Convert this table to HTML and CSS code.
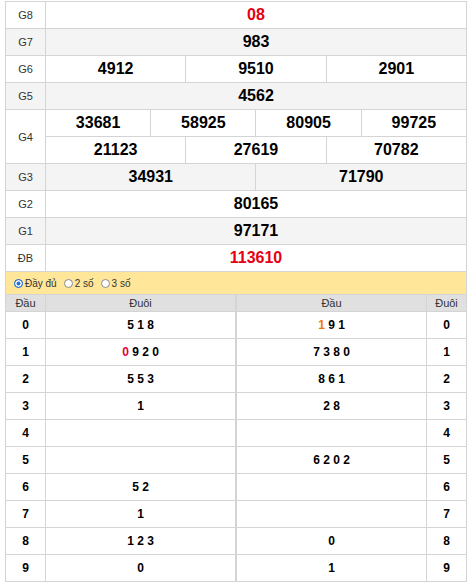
FILE: index.html
```html
<!DOCTYPE html>
<html lang="vi">
<head>
<meta charset="utf-8">
<title>Kết quả xổ số</title>
<link rel="stylesheet" href="styles.css">
</head>
<body>
<div class="wrap">
  <table class="kq">
    <colgroup>
      <col class="c-lb">
      <col><col><col><col><col><col><col><col><col><col><col><col>
    </colgroup>
    <tbody>
      <tr><td class="lb">G8</td><td colspan="12" class="red">08</td></tr>
      <tr class="alt"><td class="lb">G7</td><td colspan="12">983</td></tr>
      <tr><td class="lb">G6</td><td colspan="4">4912</td><td colspan="4">9510</td><td colspan="4">2901</td></tr>
      <tr class="alt"><td class="lb">G5</td><td colspan="12">4562</td></tr>
      <tr><td class="lb" rowspan="2">G4</td><td colspan="3">33681</td><td colspan="3">58925</td><td colspan="3">80905</td><td colspan="3">99725</td></tr>
      <tr><td colspan="4">21123</td><td colspan="4">27619</td><td colspan="4">70782</td></tr>
      <tr class="alt"><td class="lb">G3</td><td colspan="6">34931</td><td colspan="6">71790</td></tr>
      <tr><td class="lb">G2</td><td colspan="12">80165</td></tr>
      <tr class="alt"><td class="lb">G1</td><td colspan="12">97171</td></tr>
      <tr><td class="lb">ĐB</td><td colspan="12" class="red">113610</td></tr>
    </tbody>
  </table>

  <div class="opts">
    <label class="opt"><input type="radio" name="mode" checked><span>Đầy đủ</span></label>
    <label class="opt"><input type="radio" name="mode"><span>2 số</span></label>
    <label class="opt"><input type="radio" name="mode"><span>3 số</span></label>
  </div>

  <div class="loto">
    <table class="lt lt-left">
      <colgroup><col class="c-head"><col></colgroup>
      <thead><tr><th>Đầu</th><th>Đuôi</th></tr></thead>
      <tbody>
        <tr><td>0</td><td>5 1 8</td></tr>
        <tr><td>1</td><td><span class="red2">0</span> 9 2 0</td></tr>
        <tr><td>2</td><td>5 5 3</td></tr>
        <tr><td>3</td><td>1</td></tr>
        <tr><td>4</td><td></td></tr>
        <tr><td>5</td><td></td></tr>
        <tr><td>6</td><td>5 2</td></tr>
        <tr><td>7</td><td>1</td></tr>
        <tr><td>8</td><td>1 2 3</td></tr>
        <tr><td>9</td><td>0</td></tr>
      </tbody>
    </table>
    <table class="lt lt-right">
      <colgroup><col><col class="c-head"></colgroup>
      <thead><tr><th>Đầu</th><th>Đuôi</th></tr></thead>
      <tbody>
        <tr><td><span class="orange">1</span> 9 1</td><td>0</td></tr>
        <tr><td>7 3 8 0</td><td>1</td></tr>
        <tr><td>8 6 1</td><td>2</td></tr>
        <tr><td>2 8</td><td>3</td></tr>
        <tr><td></td><td>4</td></tr>
        <tr><td>6 2 0 2</td><td>5</td></tr>
        <tr><td></td><td>6</td></tr>
        <tr><td></td><td>7</td></tr>
        <tr><td>0</td><td>8</td></tr>
        <tr><td>1</td><td>9</td></tr>
      </tbody>
    </table>
  </div>
</div>
</body>
</html>
```

FILE: styles.css
```css
body {
  margin: 0;
  background: #fff;
  font-family: "Liberation Sans", Arial, sans-serif;
  color: #000;
}

.wrap {
  width: 462px;
  padding: 1px 0 0 5px;
}

table {
  border-collapse: collapse;
  table-layout: fixed;
}

.kq {
  width: 462px;
}

.kq .c-lb {
  width: 40px;
}

.kq td {
  border: 1px solid #d4d4d4;
  height: 26px;
  padding: 0;
  text-align: center;
  vertical-align: middle;
  font-size: 16px;
  font-weight: bold;
  color: #000;
}

.kq td.lb {
  font-size: 11px;
  font-weight: normal;
  color: #333;
}

.kq tr.alt td {
  background: #f4f4f4;
}

.kq td.red {
  color: #e60012;
}

.opts {
  height: 22px;
  border-left: 1px solid #d4d4d4;
  border-right: 1px solid #d4d4d4;
  background: #ffe699;
  display: flex;
  align-items: center;
  gap: 7px;
  padding-left: 8px;
  font-size: 10px;
  color: #333;
}

.opt {
  display: flex;
  align-items: center;
  gap: 2px;
}

.opt input {
  appearance: none;
  -webkit-appearance: none;
  margin: 0;
  width: 9px;
  height: 9px;
  border: 1px solid #8a8a8a;
  border-radius: 50%;
  background: #fff;
}

.opt input:checked {
  border-color: #1e6fd9;
  background: #1e6fd9;
  box-shadow: inset 0 0 0 1.5px #fff;
}

.loto {
  display: flex;
  width: 462px;
}

.lt {
  width: 231px;
}

.lt .c-head {
  width: 40px;
}

.lt th {
  border: 1px solid #d4d4d4;
  height: 16px;
  padding: 0;
  background: #e0e0e0;
  font-size: 11px;
  font-weight: normal;
  color: #333;
  text-align: center;
  vertical-align: middle;
}

.lt td {
  border: 1px solid #d4d4d4;
  height: 26px;
  padding: 0;
  text-align: center;
  vertical-align: middle;
  font-size: 12px;
  font-weight: bold;
  color: #000;
}

.red2 {
  color: #e6003c;
}

.orange {
  color: #f07800;
}
```
